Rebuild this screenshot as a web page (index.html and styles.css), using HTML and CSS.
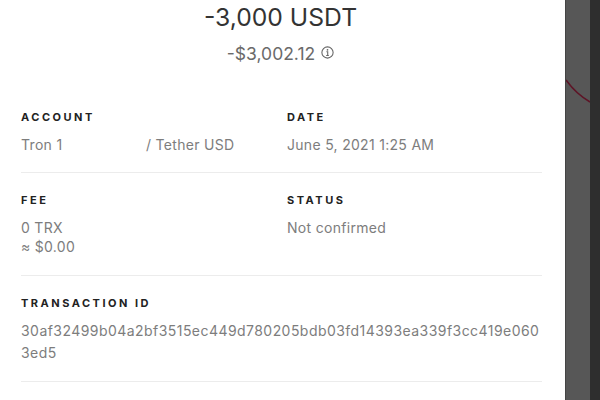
FILE: index.html
```
<!DOCTYPE html>
<html>
<head>
<meta charset="utf-8">
<link rel="stylesheet" href="styles.css">
</head>
<body>
<div class="screen">
  <div class="panel">
    <div class="header">
      <div class="amount">-3,000 USDT</div>
      <div class="fiat">-$3,002.12
        <svg class="info" viewBox="0 0 12 12" width="13" height="13"><circle cx="6" cy="6" r="5.2" fill="none" stroke="#666" stroke-width="1"/><circle cx="6" cy="3.5" r="0.8" fill="#666"/><path d="M5 5.3h1.2v3.4M4.8 8.7h2.4" fill="none" stroke="#666" stroke-width="1"/></svg>
      </div>
    </div>
    <div class="section grid">
      <div class="field">
        <div class="label">ACCOUNT</div>
        <div class="value account"><span class="acc-name">Tron 1</span><span>/ Tether USD</span></div>
      </div>
      <div class="field">
        <div class="label">DATE</div>
        <div class="value">June 5, 2021 1:25 AM</div>
      </div>
    </div>
    <div class="section grid fee">
      <div class="field">
        <div class="label">FEE</div>
        <div class="value">0 TRX</div>
        <div class="sub">≈ $0.00</div>
      </div>
      <div class="field">
        <div class="label">STATUS</div>
        <div class="value">Not confirmed</div>
      </div>
    </div>
    <div class="section">
      <div class="label">TRANSACTION ID</div>
      <div class="value hash">30af32499b04a2bf3515ec449d780205bdb03fd14393ea339f3cc419e0603ed5</div>
    </div>
    <div class="section last">
      <div class="label">NOTE</div>
    </div>
  </div>
  <div class="strip">
    <svg class="curve" viewBox="0 0 25 30" width="25" height="30"><path d="M0 2 Q10 16 24 24" fill="none" stroke="#5e1426" stroke-width="1.6"/></svg>
  </div>
  <div class="dark"></div>
</div>
</body>
</html>
```
FILE: styles.css
```
html, body {
  margin: 0;
  padding: 0;
  width: 600px;
  height: 400px;
  overflow: hidden;
  background: #fff;
  font-family: Inter, "Noto Sans", sans-serif;
}
.screen {
  display: flex;
  width: 600px;
  height: 400px;
}
.panel {
  width: 565px;
  flex: none;
  background: #fff;
  box-sizing: border-box;
  padding: 0 23px 0 21px;
  overflow: hidden;
}
.strip {
  width: 25px;
  flex: none;
  background: #575757;
  border-left: 1px solid #444;
  box-sizing: border-box;
  padding-top: 78px;
}
.curve { display: block; }
.dark {
  flex: 1;
  background: #2e2e2e;
}
.header {
  text-align: center;
  padding-top: 1px;
  padding-right: 2px;
}
.amount {
  font-size: 24.7px;
  line-height: 32px;
  color: #333;
}
.fiat {
  margin-top: 10px;
  font-size: 17.5px;
  line-height: 22px;
  color: #6a6a6a;
  display: flex;
  justify-content: center;
  align-items: center;
  gap: 6px;
}
.info { margin-top: -3px; }
.section {
  padding: 20px 0 17px;
  border-bottom: 1px solid #ececec;
}
.header + .section { padding-top: 45px; }
.fee { padding-bottom: 19px; }
.grid {
  display: grid;
  grid-template-columns: 266px 1fr;
}
.label {
  font-size: 11px;
  line-height: 14px;
  font-weight: 700;
  letter-spacing: 2.5px;
  color: #222;
}
.value {
  margin-top: 11px;
  font-size: 14px;
  line-height: 20px;
  letter-spacing: 0.3px;
  color: #7d7d7d;
}
.account { display: flex; }
.acc-name { width: 125px; }
.sub {
  font-size: 14px;
  line-height: 18px;
  letter-spacing: 0.3px;
  color: #7d7d7d;
}
.hash {
  margin-top: 10px;
  line-height: 22px;
  letter-spacing: 0.45px;
  word-break: break-all;
  padding-right: 2px;
}
.last { border-bottom: none; }
```
